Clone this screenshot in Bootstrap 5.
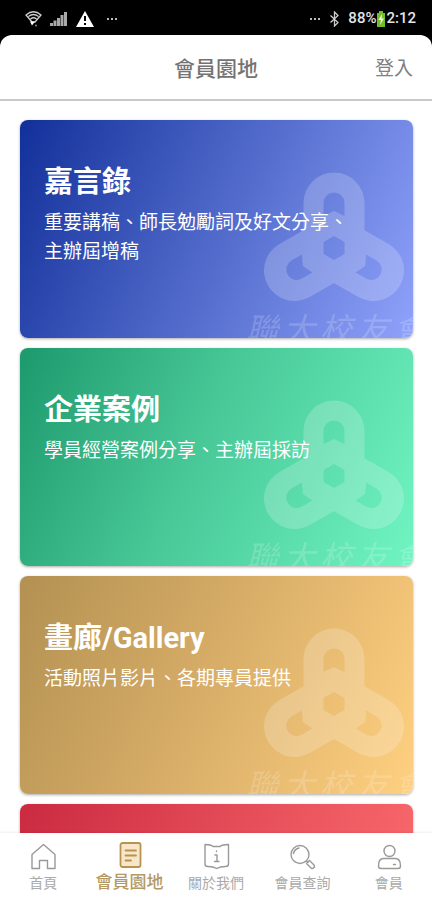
<!DOCTYPE html>
<html lang="zh-Hant">
<head>
<meta charset="utf-8">
<meta name="viewport" content="width=device-width, initial-scale=1">
<title>會員園地</title>
<link href="https://cdn.jsdelivr.net/npm/bootstrap@5.3.0/dist/css/bootstrap.min.css" rel="stylesheet">
<style>
  body { font-family: Roboto, "Noto Sans CJK TC", sans-serif; background: #000; }
  .status-bar { height: 35px; padding: 2px 16px 0 25px; color: #e4e4e4; font-size: 15px; font-weight: 500; }
  .sheet { background: #fff; border-radius: 12px 12px 0 0; min-height: 0; }
  .top-bar { display: grid; grid-template-columns: 1fr auto 1fr; height: 66px; padding: 4px 19px 0; border-bottom: 2px solid #c9c9c9; }
  .top-bar h1 { grid-column: 2; font-size: 21px; line-height: 32px; font-weight: 500; color: #737373; }
  .login { font-size: 19px; line-height: 32px; color: #808080; }
  .feed { min-height: 0; overflow-y: auto; scrollbar-width: none; padding: 19px 19px 19px 20px; gap: 10px; }
  .feed::-webkit-scrollbar { display: none; }
  .topic { flex: none; min-height: 218px; padding: 42px 24px 24px; border-radius: 8px; color: #fff; box-shadow: 0 1px 3px #0005; }
  .topic:hover { color: #fff; }
  .topic h2 { font-size: 29px; line-height: 40px; font-weight: 700; margin-bottom: 6px; }
  .topic p { font-size: 19px; line-height: 29px; max-width: 310px; }
  .blue { background: linear-gradient(114deg, #12309a, #4a64c5 45%, #8fa2fb); }
  .green { background: linear-gradient(114deg, #1d9a6d, #48c797 45%, #70f5c2); }
  .gold { background: linear-gradient(114deg, #b39152, #d5ab66 45%, #ffd080); }
  .red { background: linear-gradient(114deg, #cb2a40, #e44c58 45%, #ff7272); }
  .emblem { right: 8px; top: 52px; width: 142px; height: 130px; fill: #fff; opacity: .2; }
  .calligraphy { left: 226px; top: 192px; gap: 5px; font-size: 32px; line-height: 36px; font-style: italic; opacity: .18; white-space: nowrap; }
  .tabs { display: grid; grid-template-columns: repeat(5, 1fr); height: 67px; padding-top: 8px; background: #fff; box-shadow: 0 -1px 2px #0001; }
  .tab-item { font-size: 14px; line-height: 20px; color: #aaa; gap: 2px; }
  .tab-item svg { width: 30px; height: 30px; fill: none; stroke: #999; stroke-width: 1.4; stroke-linejoin: round; stroke-linecap: round; }
  .tab-item.active { font-size: 17px; color: #b39a63; font-weight: 500; gap: 1px; }
  .tab-item.active svg { stroke: #b8934f; stroke-width: 1.8; }
</style>
<script src="https://cdn.jsdelivr.net/npm/bootstrap@5.3.0/dist/js/bootstrap.bundle.min.js"></script>
</head>
<body class="vh-100 d-flex flex-column overflow-hidden">

<svg class="position-absolute" width="0" height="0" aria-hidden="true">
  <defs>
    <mask id="knot" maskUnits="userSpaceOnUse" x="-80" y="-80" width="160" height="160">
      <path d="M0 0V-45M0 0L-39.500 22.500M0 0L39.500 22.500" stroke="#fff" stroke-width="61" stroke-linecap="round" fill="none"/>
      <path d="M-10.500 -32V-45A10.500 10.500 0 0 1 10.500 -45V-32L0 -37Z" fill="#000"/>
      <path d="M-10.500 -26V-38A10.500 10.500 0 0 1 10.500 -38V-26L0 -31Z" fill="#000" transform="rotate(120) translate(0 -5)"/>
      <path d="M-10.500 -26V-38A10.500 10.500 0 0 1 10.500 -38V-26L0 -31Z" fill="#000" transform="rotate(240) translate(0 -5)"/>
      <path d="M0 -12L10.500 -6V6L0 12L-10.500 6V-6Z" fill="#000"/>
    </mask>
  </defs>
</svg>

<div class="status-bar d-flex justify-content-between align-items-center flex-shrink-0">
  <div class="d-flex align-items-center gap-2">
    <svg width="17" height="18" viewBox="0 0 17 18" fill="none" stroke="#ccc"><path d="M1 5Q8.500-1.500 16 5L10 12H7ZM3.500 6.500Q8.500 2.500 13.500 6.500M5.500 9Q8.500 6.500 11.500 9" stroke-width="1.300"/><path d="M5 11.500h5l-3 4z" fill="#fff" stroke="none"/><circle cx="11" cy="15.500" r="1" fill="#888" stroke="none"/></svg>
    <svg width="18" height="16" viewBox="0 0 18 16" fill="#aaa"><path d="M0 12h3v3H0zM3.500 9.500h3V15h-3zM7 7h3v8H7zM10.500 4h3v11h-3zM14 1h3v14h-3z"/></svg>
    <svg width="18" height="16" viewBox="0 0 18 16"><path d="M9 0L18 16H0Z" fill="#fff"/><path d="M9 5v5M9 12v2" stroke="#000" stroke-width="2"/></svg>
    <svg class="ms-1" width="12" height="4" viewBox="0 0 12 4" fill="#bbb"><path d="M1 1h2v2H1zM5 1h2v2H5zM9 1h2v2H9z"/></svg>
  </div>
  <div class="d-flex align-items-center">
    <svg class="me-2" width="12" height="4" viewBox="0 0 12 4" fill="#bbb"><path d="M1 1h2v2H1zM5 1h2v2H5zM9 1h2v2H9z"/></svg>
    <svg class="me-2" width="11" height="16" viewBox="0 0 11 16" fill="none" stroke="#ccc" stroke-width="1.300"><path d="M1.500 4.500L9 11.500L5.500 15V1L9 4.500L1.500 11.500"/></svg>
    <span>88%</span>
    <svg width="10" height="16" viewBox="0 0 10 16"><path d="M3 0h4v2h2v14H1V2h2z" fill="#72bd28"/><path d="M6 3L2.500 9H5l-1 5L8 7.500H5.500z" fill="#efffdc"/></svg>
    <span>2:12</span>
  </div>
</div>

<div class="sheet flex-grow-1 d-flex flex-column overflow-hidden">
  <header class="top-bar align-items-center flex-shrink-0">
    <h1 class="m-0">會員園地</h1>
    <a class="login text-decoration-none text-end" href="#login">登入</a>
  </header>

  <main class="feed flex-grow-1 d-flex flex-column">
    <a href="#quotes" class="topic blue d-block position-relative overflow-hidden text-decoration-none">
      <svg class="emblem position-absolute" viewBox="-71 -76 142 130" aria-hidden="true"><path d="M-80-80H80V80H-80Z" mask="url(#knot)"/></svg>
      <div class="calligraphy position-absolute d-flex" aria-hidden="true"><span>聯</span><span>大</span><span>校</span><span>友</span><span>會</span></div>
      <h2 class="position-relative">嘉言錄</h2>
      <p class="position-relative m-0">重要講稿、師長勉勵詞及好文分享、主辦屆增稿</p>
    </a>
    <a href="#cases" class="topic green d-block position-relative overflow-hidden text-decoration-none">
      <svg class="emblem position-absolute" viewBox="-71 -76 142 130" aria-hidden="true"><path d="M-80-80H80V80H-80Z" mask="url(#knot)"/></svg>
      <div class="calligraphy position-absolute d-flex" aria-hidden="true"><span>聯</span><span>大</span><span>校</span><span>友</span><span>會</span></div>
      <h2 class="position-relative">企業案例</h2>
      <p class="position-relative m-0">學員經營案例分享、主辦屆採訪</p>
    </a>
    <a href="#gallery" class="topic gold d-block position-relative overflow-hidden text-decoration-none">
      <svg class="emblem position-absolute" viewBox="-71 -76 142 130" aria-hidden="true"><path d="M-80-80H80V80H-80Z" mask="url(#knot)"/></svg>
      <div class="calligraphy position-absolute d-flex" aria-hidden="true"><span>聯</span><span>大</span><span>校</span><span>友</span><span>會</span></div>
      <h2 class="position-relative">畫廊/Gallery</h2>
      <p class="position-relative m-0">活動照片影片、各期專員提供</p>
    </a>
    <a href="#more" class="topic red d-block" aria-label="更多"></a>
  </main>

  <nav class="tabs flex-shrink-0">
    <a href="#home" class="tab-item d-flex flex-column align-items-center text-decoration-none">
      <svg viewBox="0 0 30 30"><path d="M4 13.500L15.500 3.500L27 13.500V27.500H19.500V19.500H11.500V27.500H4Z"/></svg>首頁</a>
    <a href="#members" class="tab-item active d-flex flex-column align-items-center text-decoration-none" aria-current="page">
      <svg viewBox="0 0 30 30"><rect x="5.500" y="2" width="20" height="24" rx="2" fill="#f8e6c9"/><path d="M10.500 9.500H21M10.500 14.500H21M10.500 19.500H16"/></svg>會員園地</a>
    <a href="#about" class="tab-item d-flex flex-column align-items-center text-decoration-none">
      <svg viewBox="0 0 30 30"><path d="M4 3.500Q10 3.500 12 5.500H19Q21 3.500 27.500 3.500V23Q27.500 25.500 24.500 25.500Q19 25.500 15.700 27.500Q12.500 25.500 7 25.500Q4 25.500 4 23ZM14 14H16V20.500M13.500 20.500H18M15.500 10V10.500"/></svg>關於我們</a>
    <a href="#search" class="tab-item d-flex flex-column align-items-center text-decoration-none">
      <svg viewBox="0 0 30 30"><circle cx="13" cy="13.500" r="9"/><path d="M6.500 12.500Q7.500 8 12 7M19.500 20L21 21.500M22.500 19.500L27 24Q28 26 26.500 27Q25 28 24 27L19.500 22.500Z"/></svg>會員查詢</a>
    <a href="#account" class="tab-item d-flex flex-column align-items-center text-decoration-none">
      <svg viewBox="0 0 30 30"><circle cx="15.500" cy="10" r="5.500"/><path d="M4.500 25Q4.500 17.500 9.500 17.500H21.500Q26.500 17.500 26.500 25Q26.500 27.500 24 27.500H7Q4.500 27.500 4.500 25ZM19.500 23.500H21.500"/></svg>會員</a>
  </nav>
</div>
</body>
</html>
